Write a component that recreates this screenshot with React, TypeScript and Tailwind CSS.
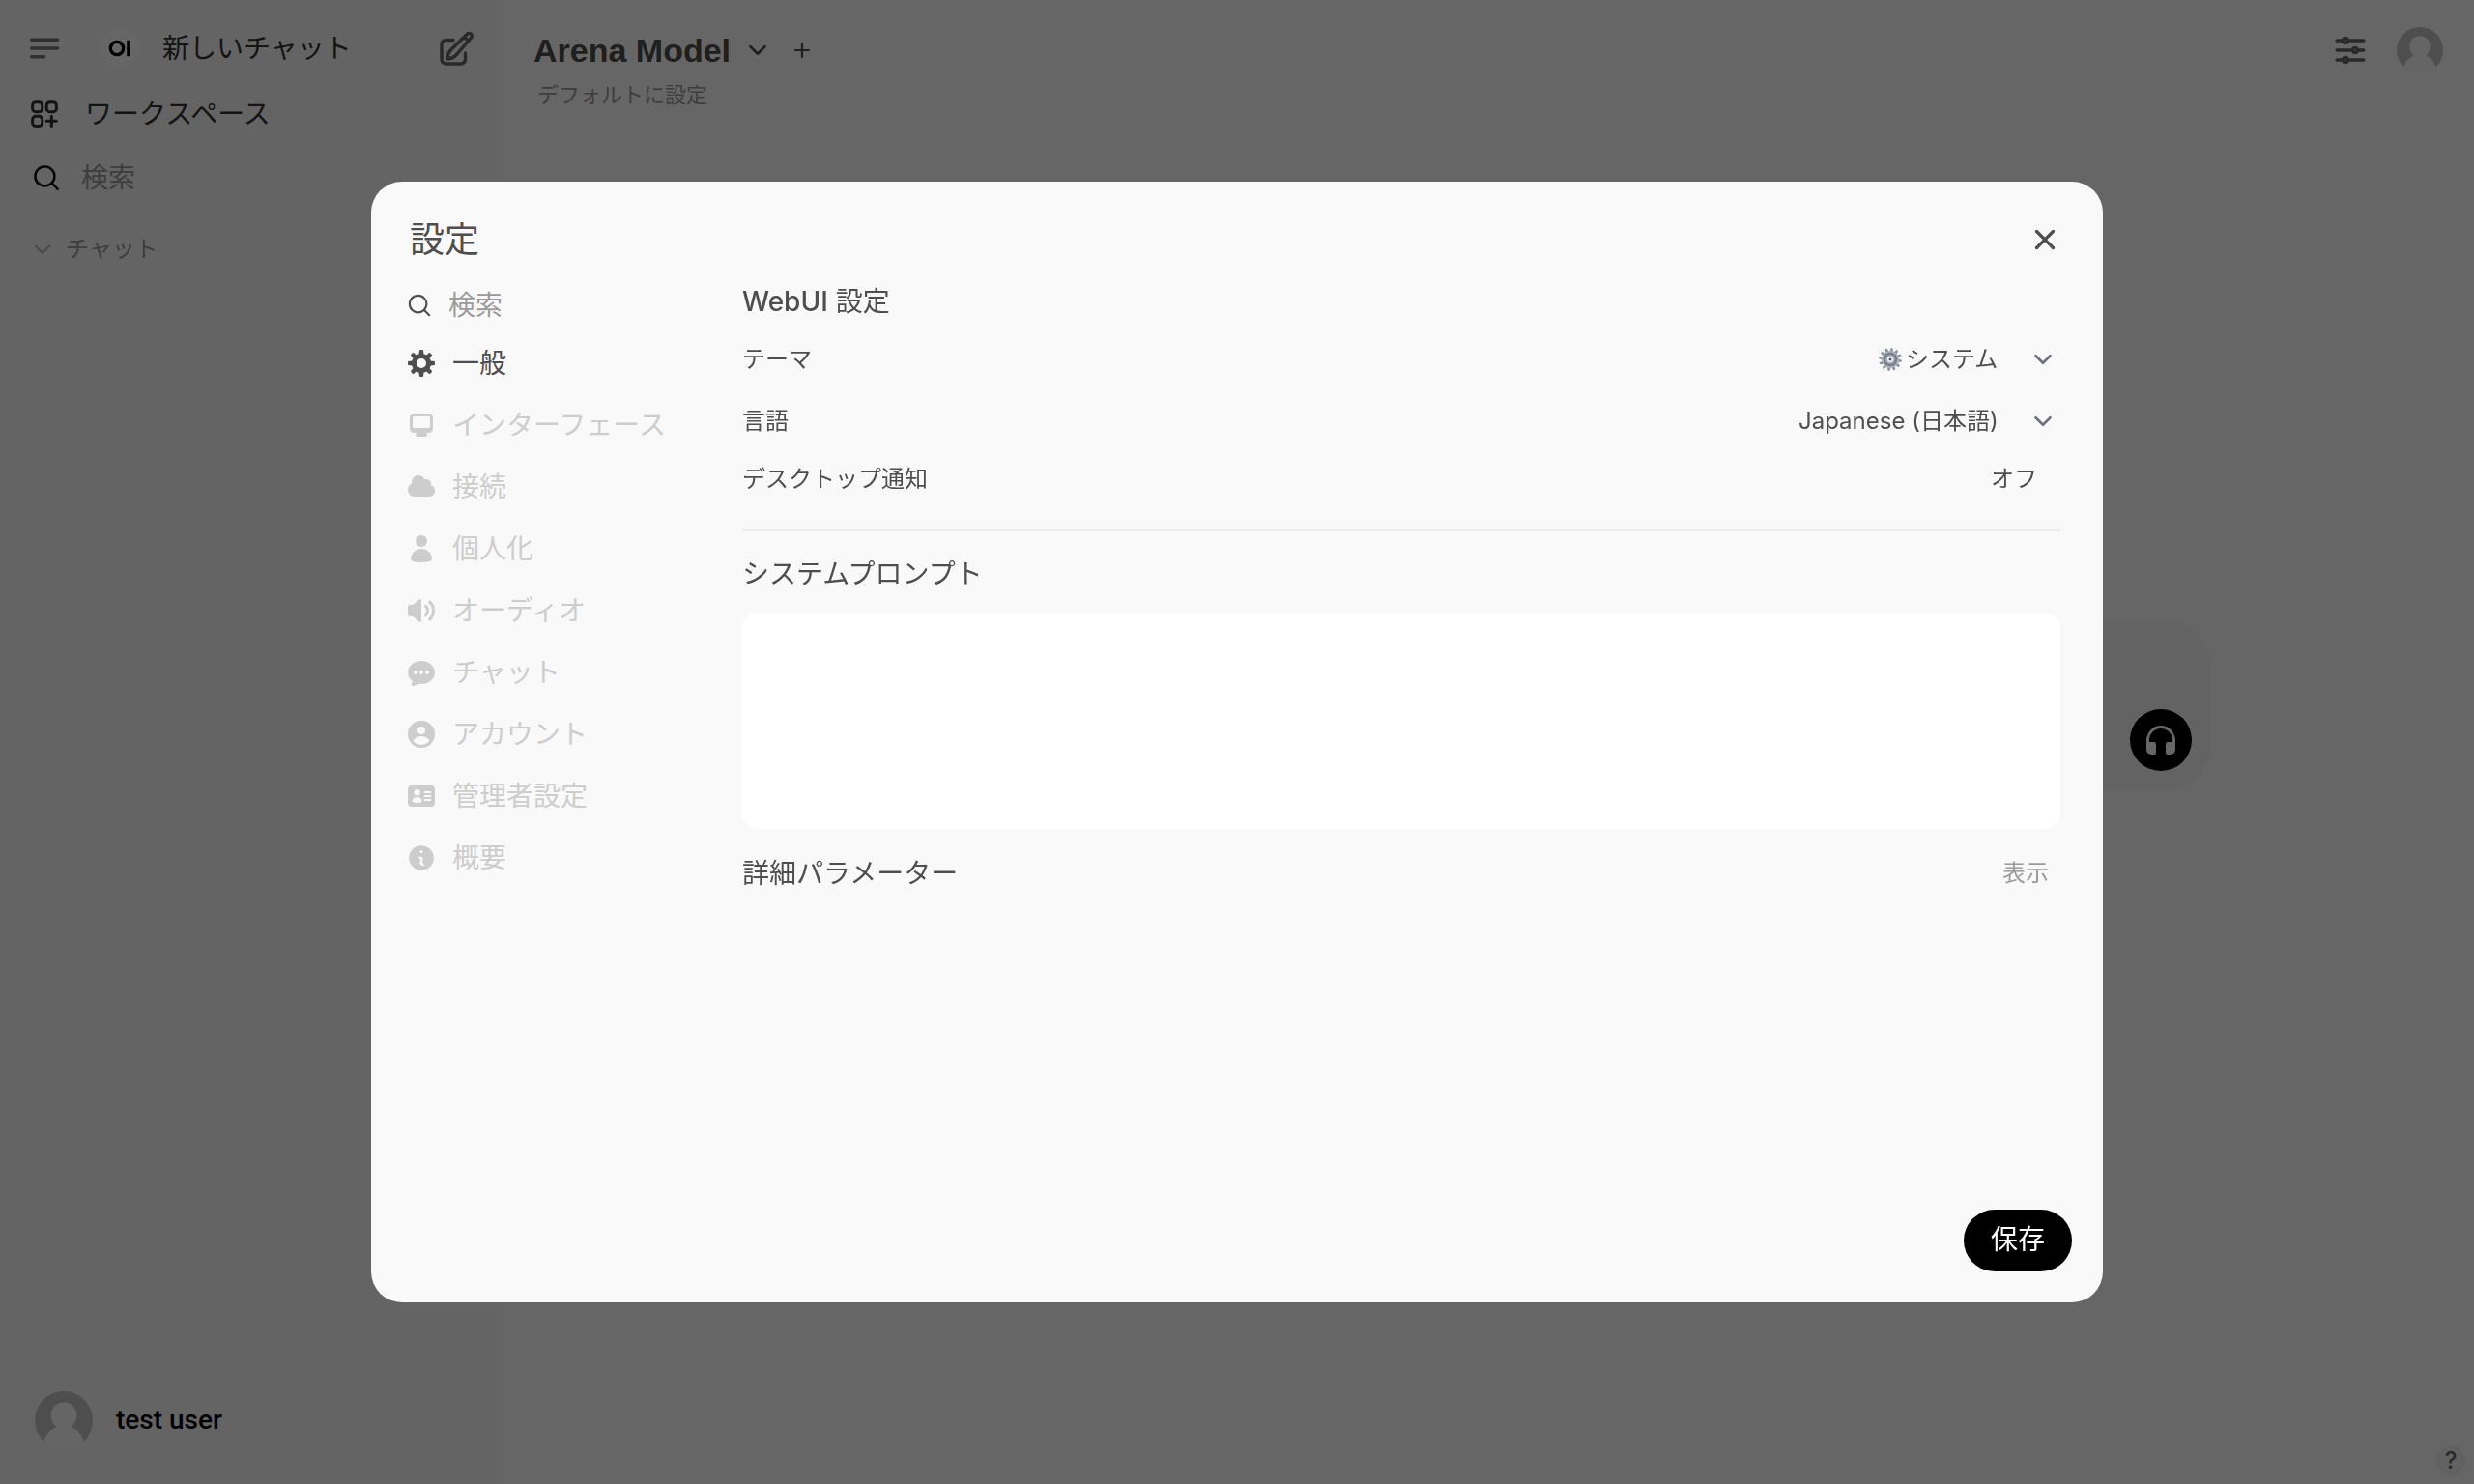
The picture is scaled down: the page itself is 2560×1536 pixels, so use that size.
import { useState } from "react";
import type { ReactNode } from "react";
import { HiMiniInformationCircle, HiMiniMagnifyingGlass, HiOutlineAdjustmentsHorizontal, HiOutlineSquaresPlus } from "react-icons/hi2";

const headingFont = "font-['Liberation_Sans','Noto_Sans_CJK_JP',sans-serif]";
const uiFont = "font-['Inter','Noto_Sans_CJK_JP',sans-serif]";

function Glyph({ children }: { children: ReactNode }) {
  return (
    <svg viewBox="0 0 16 16" fill="currentColor" fillRule="evenodd" clipRule="evenodd" className="size-8 shrink-0" aria-hidden>
      {children}
    </svg>
  );
}

function Chevron({ className, thin = false }: { className: string; thin?: boolean }) {
  return (
    <svg
      viewBox="0 0 24 24"
      fill="none"
      stroke="currentColor"
      strokeWidth={thin ? 1.8 : 2.6}
      strokeLinecap="round"
      strokeLinejoin="round"
      className={className}
      aria-hidden
    >
      <path d="M4.500 8.250 12 15.750l7.500-7.500" />
    </svg>
  );
}

function Avatar({ className }: { className: string }) {
  return (
    <svg viewBox="0 0 60 60" className={className} aria-hidden>
      <circle cx="30" cy="30" r="30" fill="#c4c4c4" />
      <path
        d="M30 11.500c7.600 0 13.400 6 13.400 13.400 0 5.400-2.800 9.800-6.300 12 6.900 1.800 12 8.100 13.600 15.300A30 30 0 0 1 30 60 30 30 0 0 1 9.300 52.200C10.900 45 16 38.700 22.900 36.900c-3.500-2.200-6.300-6.600-6.300-12 0-7.400 5.800-13.400 13.400-13.400Z"
        fill="#fcfcfc"
      />
    </svg>
  );
}

function ThemeGear() {
  return (
    <svg viewBox="-12 -12 24 24" className="size-6 shrink-0" aria-hidden>
      <g fill="#8b929c">
        {[0, 30, 60, 90, 120, 150, 180, 210, 240, 270, 300, 330].map((a) => (
          <path key={a} d="M-2 -8 -0.800 -12 0.800 -12 2 -8Z" transform={`rotate(${a + 8})`} />
        ))}
      </g>
      <circle r="9" fill="#b3b9c2" />
      <circle r="7.500" fill="#78808c" />
      <circle r="5" fill="#9aa2ae" />
      <circle r="3.400" fill="#e3e6ec" />
      <circle r="1.300" fill="#4b5260" />
    </svg>
  );
}

const tabs = [
  {
    label: "一般",
    icon: (
      <Glyph>
        <path d="M6.955 1.450A.5.5 0 0 1 7.452 1h1.096a.5.5 0 0 1 .497.45l.17 1.699c.484.12.94.312 1.356.562l1.321-1.081a.5.5 0 0 1 .67.033l.774.775a.5.5 0 0 1 .034.67l-1.080 1.320c.25.417.44.873.561 1.357l1.699.17a.5.5 0 0 1 .45.497v1.096a.5.5 0 0 1-.45.497l-1.699.17c-.12.484-.312.94-.562 1.356l1.082 1.322a.5.5 0 0 1-.034.67l-.774.774a.5.5 0 0 1-.67.033l-1.322-1.080c-.416.25-.872.44-1.356.561l-.17 1.699a.5.5 0 0 1-.497.45H7.452a.5.5 0 0 1-.497-.45l-.17-1.699a4.973 4.973 0 0 1-1.356-.562L4.108 13.370a.5.5 0 0 1-.67-.033l-.774-.775a.5.5 0 0 1-.034-.67l1.080-1.320a4.971 4.971 0 0 1-.561-1.357l-1.699-.17A.5.5 0 0 1 1 8.548V7.452a.5.5 0 0 1 .45-.497l1.699-.17c.12-.484.312-.94.562-1.356L2.629 4.107a.5.5 0 0 1 .034-.67l.774-.774a.5.5 0 0 1 .67-.033L5.430 3.710a4.970 4.970 0 0 1 1.356-.561l.17-1.699ZM5.500 8a2.500 2.500 0 1 0 5 0 2.500 2.500 0 0 0-5 0Z" />
      </Glyph>
    ),
  },
  {
    label: "インターフェース",
    icon: (
      <Glyph>
        <path d="M2 4.250A2.250 2.250 0 0 1 4.250 2h7.500A2.250 2.250 0 0 1 14 4.250v5.500A2.250 2.250 0 0 1 11.750 12h-1.312c.1.128.21.248.328.36a.75.75 0 0 1 .234.545v.345a.75.75 0 0 1-.75.75h-4.500a.75.75 0 0 1-.75-.75v-.345a.75.75 0 0 1 .234-.545c.118-.111.228-.232.328-.36H4.250A2.250 2.250 0 0 1 2 9.750v-5.500Zm2.250-.75a.75.75 0 0 0-.75.75v4.500c0 .414.336.75.75.75h7.500a.75.75 0 0 0 .75-.75v-4.500a.75.75 0 0 0-.75-.75h-7.500Z" />
      </Glyph>
    ),
  },
  {
    label: "接続",
    icon: (
      <Glyph>
        <path d="M1 9.500A3.500 3.500 0 0 0 4.500 13H12a3 3 0 0 0 .917-5.857 2.503 2.503 0 0 0-3.198-3.019 3.500 3.500 0 0 0-6.628 2.171A3.500 3.500 0 0 0 1 9.500Z" />
      </Glyph>
    ),
  },
  {
    label: "個人化",
    icon: (
      <Glyph>
        <circle cx="8" cy="4" r="3" />
        <path d="M2.500 13.500C2.500 10.400 5 8 8 8s5.500 2.400 5.500 5.500c0 .9-2.500 1.500-5.500 1.500s-5.500-.6-5.500-1.500Z" />
      </Glyph>
    ),
  },
  {
    label: "オーディオ",
    icon: (
      <Glyph>
        <path d="M7.557 2.066A.75.75 0 0 1 8 2.750v10.500a.75.75 0 0 1-1.248.56L3.590 11H2a1 1 0 0 1-1-1V6a1 1 0 0 1 1-1h1.590l3.162-2.810a.75.75 0 0 1 .805-.124ZM12.950 3.050a.75.75 0 1 0-1.060 1.060 5.500 5.500 0 0 1 0 7.780.75.75 0 1 0 1.060 1.060 7 7 0 0 0 0-9.900Z" />
        <path d="M10.828 5.172a.75.75 0 1 0-1.060 1.060 2.500 2.500 0 0 1 0 3.536.75.75 0 1 0 1.060 1.060 4 4 0 0 0 0-5.656Z" />
      </Glyph>
    ),
  },
  {
    label: "チャット",
    icon: (
      <Glyph>
        <path d="M8 2C4.262 2 1 4.570 1 8c0 1.860.98 3.486 2.455 4.566a3.472 3.472 0 0 1-.469 1.260.75.75 0 0 0 .713 1.140 6.961 6.961 0 0 0 3.060-1.060c.403.062.818.094 1.241.094 3.738 0 7-2.570 7-6s-3.262-6-7-6ZM5 9a1 1 0 1 0 0-2 1 1 0 0 0 0 2Zm7-1a1 1 0 1 1-2 0 1 1 0 0 1 2 0ZM8 9a1 1 0 1 0 0-2 1 1 0 0 0 0 2Z" />
      </Glyph>
    ),
  },
  {
    label: "アカウント",
    icon: (
      <Glyph>
        <path d="M15 8A7 7 0 1 1 1 8a7 7 0 0 1 14 0Zm-5-2a2 2 0 1 1-4 0 2 2 0 0 1 4 0ZM8 9c-1.825 0-3.422.977-4.295 2.437A5.490 5.490 0 0 0 8 13.500a5.490 5.490 0 0 0 4.294-2.063A4.997 4.997 0 0 0 8 9Z" />
      </Glyph>
    ),
  },
  {
    label: "管理者設定",
    icon: (
      <Glyph>
        <path d="M3 2.500h10a2 2 0 0 1 2 2v7a2 2 0 0 1-2 2H3a2 2 0 0 1-2-2v-7a2 2 0 0 1 2-2ZM5.800 4.500a1.600 1.600 0 1 0 0 3.200 1.600 1.600 0 0 0 0-3.200ZM5.800 8.500c-1.400 0-2.500.9-2.500 2.100 0 .5 1.100.9 2.500.9s2.500-.4 2.500-.9c0-1.200-1.100-2.100-2.500-2.100ZM9.500 5.500v1H13v-1H9.500Zm0 2v1H13v-1H9.500Zm0 2v1H13v-1H9.500Z" />
      </Glyph>
    ),
  },
  { label: "概要", icon: <HiMiniInformationCircle className="size-8 shrink-0" /> },
];

function Sidebar() {
  return (
    <aside className="flex w-[520px] shrink-0 flex-col bg-[#f9f9f9] pt-5 pb-9 text-[28px] leading-10">
      <div className="flex h-[60px] items-center px-7">
        <button type="button" aria-label="メニュー" className="text-[#767676]">
          <svg viewBox="0 0 36 36" fill="none" stroke="currentColor" strokeWidth="3.400" strokeLinecap="round" className="size-9">
            <path d="M4.600 9.200h27M4.600 18h27M4.600 26.800h13" />
          </svg>
        </button>
        <a href="#" className="ml-10 flex flex-1 items-center gap-6 text-[#333333]">
          <span className="flex size-10 items-center justify-center rounded-full bg-white text-black">
            <svg viewBox="0 0 24 18" className="h-[18px] w-6" aria-hidden>
              <circle cx="9" cy="9" r="6.700" fill="none" stroke="currentColor" strokeWidth="3.300" />
              <rect x="19.200" y="0.800" width="3.700" height="16.400" fill="currentColor" />
            </svg>
          </span>
          新しいチャット
        </a>
        <button type="button" aria-label="編集" className="text-[#676767]">
          <svg viewBox="0 0 40 40" fill="none" stroke="currentColor" strokeWidth="3.400" strokeLinecap="round" strokeLinejoin="round" className="size-10">
            <path d="M17 11.500H9.500a4.500 4.500 0 0 0-4.500 4.500v15.500A4.500 4.500 0 0 0 9.500 36H25a4.500 4.500 0 0 0 4.500-4.500V25" />
            <path d="M31.400 5.200a2.800 2.800 0 0 1 4 4L20.500 26.500c-2.500 2.700-5.600 4.300-9.300 4.300-.2-3.800 1.300-7.200 4-9.800L31.400 5.200ZM28.500 8.500l4.200 4" />
          </svg>
        </button>
      </div>
      <a href="#" className="mt-1.5 flex h-16 items-center gap-6 px-7 text-[#333333]">
        <HiOutlineSquaresPlus strokeWidth={2} className="size-9" />
        ワークスペース
      </a>
      <label className="mt-0.5 flex h-16 items-center gap-5 px-8">
        <HiMiniMagnifyingGlass className="size-8 shrink-0 text-black" />
        <input type="text" aria-label="検索" placeholder="検索" className="w-full bg-transparent outline-none placeholder:text-[#9b9b9b]" />
      </label>
      <button type="button" className="mt-4.5 flex h-12 items-center gap-3 px-8 text-2xl text-[#9b9b9b]">
        <Chevron thin className="size-6 text-[#b4b4b4]" />
        チャット
      </button>
      <button type="button" className="mt-auto flex items-center gap-6 px-9 font-['Roboto',sans-serif] font-medium text-black">
        <Avatar className="size-[60px]" />
        test user
      </button>
    </aside>
  );
}

function Chat() {
  return (
    <main className="relative flex flex-1 flex-col bg-white">
      <header className="flex items-start justify-between pt-5 pr-8 pl-8">
        <div>
          <div className="flex h-16 items-center text-[#4e4e4e]">
            <button type="button" className={`flex items-center gap-4 text-[34px] font-semibold ${headingFont}`}>
              Arena Model
              <Chevron className="size-6" />
            </button>
            <button type="button" aria-label="モデルを追加" className="ml-[22px]">
              <svg viewBox="0 0 24 24" fill="none" stroke="currentColor" strokeWidth="2.200" strokeLinecap="round" className="size-6">
                <path d="M12 5v14M5 12h14" />
              </svg>
            </button>
          </div>
          <button type="button" className="block px-1 text-[22px] leading-7 text-[#9b9b9b]">
            デフォルトに設定
          </button>
        </div>
        <div className="flex h-16 items-center gap-7">
          <button type="button" aria-label="コントロール" className="text-[#676767]">
            <HiOutlineAdjustmentsHorizontal strokeWidth={2.2} className="size-10" />
          </button>
          <button type="button" aria-label="test user">
            <Avatar className="size-12" />
          </button>
        </div>
      </header>
      <div className="flex flex-1 items-center justify-center pb-[188px]">
        <div className="flex h-[176px] w-full max-w-[1496px] items-end justify-end rounded-[48px] bg-[#f7f7f7] p-5">
          <button type="button" aria-label="通話" className="flex size-16 items-center justify-center rounded-full bg-black text-white">
            <svg viewBox="0 0 30 30" className="size-[30px]" aria-hidden>
              <path d="M1.500 20v-5a13.500 13.500 0 0 1 27 0v5" fill="none" stroke="currentColor" strokeWidth="3" />
              <path d="M0 17h8a2 2 0 0 1 2 2v9a2 2 0 0 1-2 2H5a5 5 0 0 1-5-5ZM30 17h-8a2 2 0 0 0-2 2v9a2 2 0 0 0 2 2h3a5 5 0 0 0 5-5Z" fill="currentColor" />
            </svg>
          </button>
        </div>
      </div>
      <button
        type="button"
        className="absolute right-2 bottom-2 flex size-8 items-center justify-center rounded-full bg-[#f6f6f6] text-2xl font-medium text-[#676767]"
      >
        ?
      </button>
    </main>
  );
}

function Settings() {
  const [active, setActive] = useState("一般");
  const [notify, setNotify] = useState(false);

  return (
    <div className="fixed inset-0 flex items-center justify-center bg-black/60">
      <section
        role="dialog"
        aria-labelledby="settings-title"
        className="flex min-h-[1160px] w-full max-w-[1792px] flex-col rounded-[32px] bg-[#f9f9f9] pb-8 text-2xl text-[#4e4e4e]"
      >
        <header className="flex items-center justify-between px-10 pt-8">
          <h1 id="settings-title" className="text-4xl leading-14">
            設定
          </h1>
          <button type="button" aria-label="閉じる">
            <svg viewBox="0 0 40 40" fill="none" stroke="currentColor" strokeWidth="3.200" strokeLinecap="round" className="size-10">
              <path d="M11.500 11.500l17 17M28.500 11.500l-17 17" />
            </svg>
          </button>
        </header>

        <div className="flex flex-1 gap-7 pr-11 pl-9">
          <nav className="w-80 shrink-0 pt-5 text-[28px] leading-10">
            <label className="flex h-10 items-center gap-4">
              <HiMiniMagnifyingGlass className="size-7 shrink-0" />
              <input type="text" aria-label="設定を検索" placeholder="検索" className="w-full bg-transparent outline-none placeholder:text-[#9b9b9b]" />
            </label>
            <div className="mt-2 flex flex-col">
              {tabs.map((tab) => (
                <button
                  key={tab.label}
                  type="button"
                  onClick={() => setActive(tab.label)}
                  className={`flex h-16 items-center gap-4 text-left ${active === tab.label ? "" : "text-[#cdcdcd]"}`}
                >
                  {tab.icon}
                  {tab.label}
                </button>
              ))}
            </div>
          </nav>

          <div className="flex-1 pt-4">
            <h2 className="text-[28px] leading-10">
              <span className="font-medium">WebUI</span> 設定
            </h2>
            <div className="mt-2 flex h-16 items-center justify-between">
              <label htmlFor="theme">テーマ</label>
              <div className="relative flex items-center gap-1">
                <ThemeGear />
                <select id="theme" className="appearance-none bg-transparent pr-16 outline-none">
                  <option>システム</option>
                </select>
                <Chevron className="pointer-events-none absolute right-1.5 size-6 text-[#6b7280]" />
              </div>
            </div>
            <div className="flex h-16 items-center justify-between">
              <label htmlFor="language">言語</label>
              <div className="relative flex items-center">
                <select id="language" className="appearance-none bg-transparent pr-16 outline-none">
                  <option>Japanese (日本語)</option>
                </select>
                <Chevron className="pointer-events-none absolute right-1.5 size-6 text-[#6b7280]" />
              </div>
            </div>
            <div className="flex h-14 items-center justify-between">
              <span id="notify">デスクトップ通知</span>
              <button type="button" aria-describedby="notify" onClick={() => setNotify(!notify)} className="px-6">
                {notify ? "オン" : "オフ"}
              </button>
            </div>
            <hr className="mt-6 border-t-2 border-[#ececec]" />
            <label htmlFor="prompt" className="mt-6 block text-[28px] leading-10">
              システムプロンプト
            </label>
            <textarea id="prompt" rows={5} className="mt-5 block h-56 w-full resize-none rounded-2xl bg-white p-6 outline-none" />
            <div className="mt-6 flex h-11 items-center justify-between">
              <h2 className="text-[28px] leading-10">詳細パラメーター</h2>
              <button type="button" className="px-3 text-[#9b9b9b]">
                表示
              </button>
            </div>
          </div>
        </div>

        <footer className="flex justify-end px-8">
          <button type="button" className="h-16 rounded-full bg-black px-7 text-[28px] text-white">
            保存
          </button>
        </footer>
      </section>
    </div>
  );
}

export default function App() {
  return (
    <div lang="ja" className={`flex min-h-screen bg-white ${uiFont}`}>
      <Sidebar />
      <Chat />
      <Settings />
    </div>
  );
}
